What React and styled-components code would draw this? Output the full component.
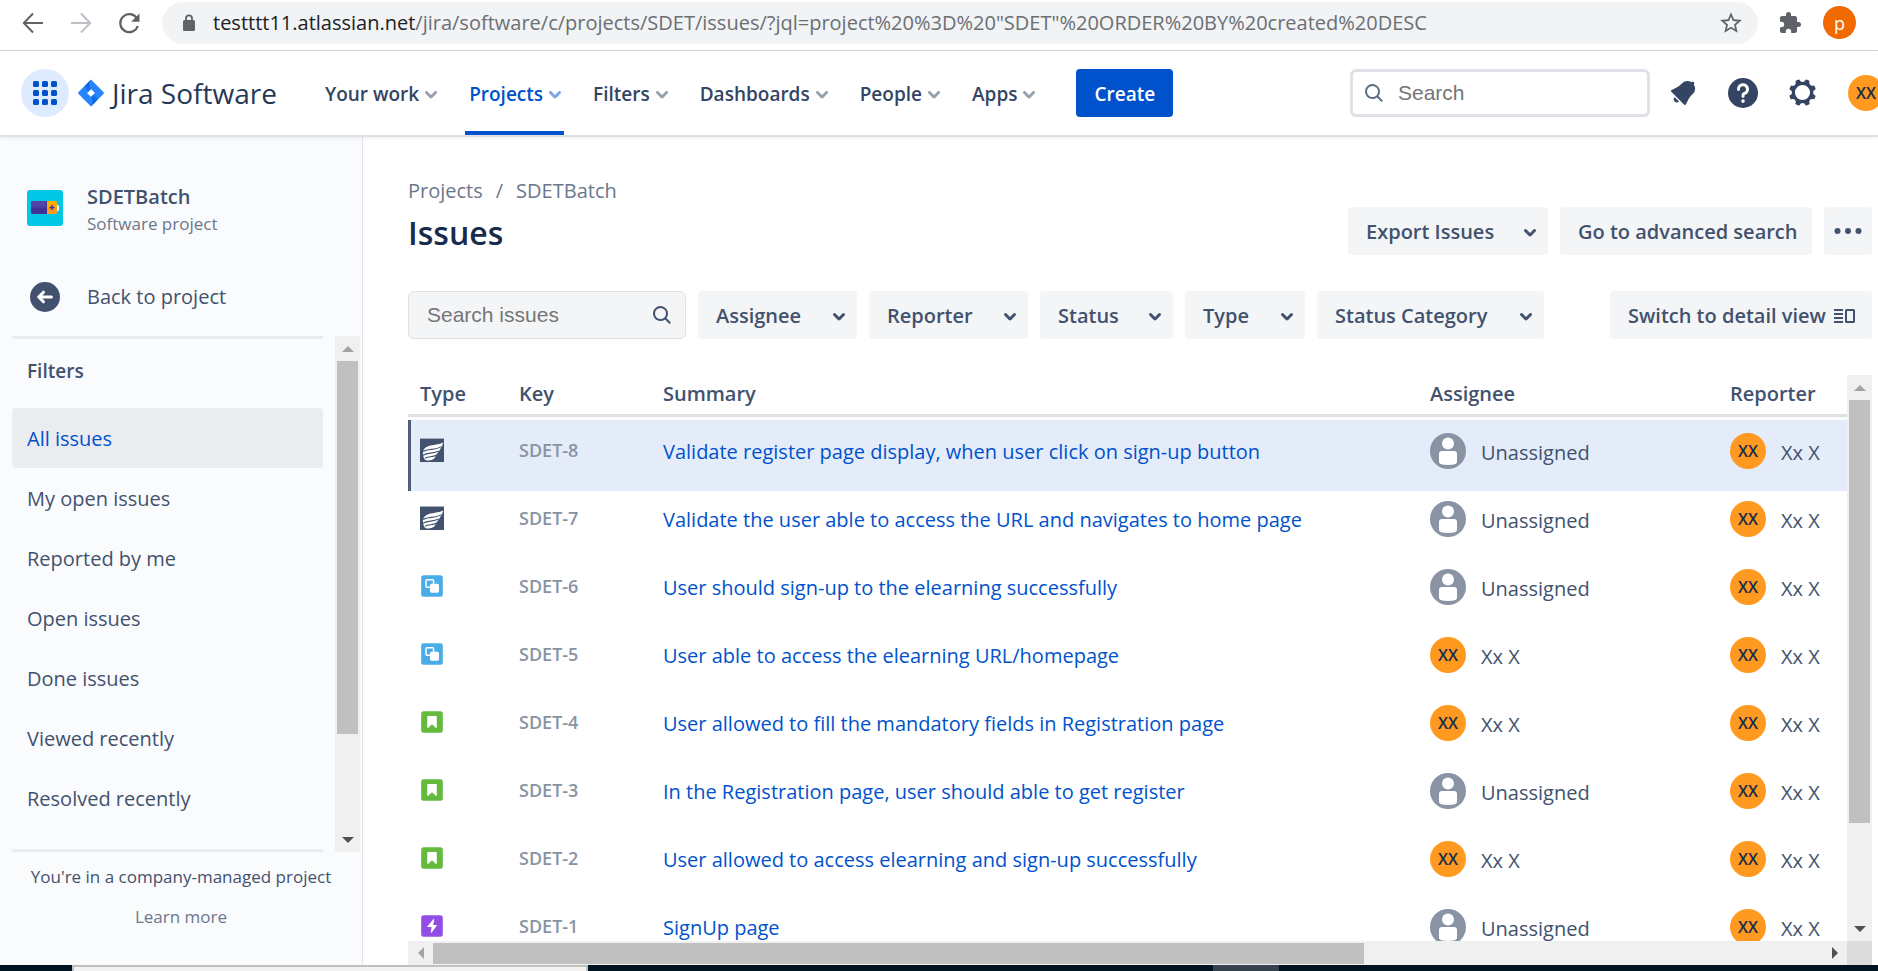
import React from "react";
import styled, { createGlobalStyle } from "styled-components";

const Global = createGlobalStyle`
  *, *::before, *::after { box-sizing: border-box; }
  body { margin: 0; background: #fff; }
  body, button, input {
    font-family: "Open Sans", "Noto Sans", sans-serif;
    font-size: 20px;
    line-height: 28px;
    color: #42526e;
  }
  button { border: 0; padding: 0; background: none; cursor: pointer; }
  a { color: inherit; text-decoration: none; }
  svg { display: block; flex: none; }
  ul, ol { list-style: none; margin: 0; padding: 0; }
  h1, h2, p { margin: 0; }
`;

/* ---------- icons ---------- */

const Chevron = ({ size = 36 }) => (
  <svg width={size} height={size} viewBox="0 0 24 24" fill="currentColor" aria-hidden="true">
    <path d="M8.292 10.293a1.009 1.009 0 000 1.419l2.939 2.965c.218.215.5.322.779.322s.556-.107.769-.322l2.93-2.955a1.01 1.01 0 000-1.419.987.987 0 00-1.406 0l-2.298 2.317-2.307-2.327a.99.99 0 00-1.406 0z" />
  </svg>
);

const Magnifier = ({ size = 24 }) => (
  <svg width={size} height={size} viewBox="0 0 24 24" fill="currentColor" aria-hidden="true">
    <path d="M16.436 15.085l3.94 4.01a1 1 0 01-1.425 1.402l-3.938-4.006a7.5 7.5 0 111.423-1.406zM10.5 16a5.5 5.5 0 100-11 5.5 5.5 0 000 11z" />
  </svg>
);

const GridIcon = () => (
  <svg width="36" height="36" viewBox="0 0 24 24" fill="currentColor" aria-hidden="true">
    {[4, 10, 16].map((y) => [4, 10, 16].map((x) => <rect key={`${x}-${y}`} x={x} y={y} width="4" height="4" rx="1" />))}
  </svg>
);

const JiraMark = () => (
  <svg width="26" height="28" viewBox="0 0 26 28" aria-hidden="true">
    <defs>
      <linearGradient id="jm" x1="13" y1="2" x2="7" y2="13" gradientUnits="userSpaceOnUse">
        <stop offset="0.1" stopColor="#0052cc" />
        <stop offset="1" stopColor="#2684ff" />
      </linearGradient>
      <linearGradient id="jn" x1="13" y1="26" x2="19" y2="15" gradientUnits="userSpaceOnUse">
        <stop offset="0.1" stopColor="#0052cc" />
        <stop offset="1" stopColor="#2684ff" />
      </linearGradient>
    </defs>
    <path fill="#2684ff" fillRule="evenodd" d="M13 0.5L25.4 13.1a1.2 1.2 0 010 1.8L13 27.5 0.6 14.9a1.2 1.2 0 010-1.8zM13 10l-4 4 4 4 4-4z" />
    <path fill="url(#jm)" d="M13 10a6.8 6.8 0 010-9.5L6.6 7.2 9.5 13.5z" />
    <path fill="url(#jn)" d="M13 18a6.8 6.8 0 010 9.5l6.4-6.7-2.9-6.3z" />
  </svg>
);

const Bell = () => (
  <svg width="36" height="36" viewBox="0 0 24 24" fill="currentColor" aria-hidden="true">
    <path d="M6.485 17.669a2 2 0 002.829 0l-2.829-2.83a2 2 0 000 2.83zm4.897-12.191l-.725.725c-.782.782-2.21 1.813-3.206 2.311l-3.017 1.509c-.495.248-.584.774-.187 1.171l8.556 8.556c.398.396.922.313 1.171-.188l1.51-3.016c.494-.988 1.526-2.42 2.311-3.206l.725-.726a5.048 5.048 0 00.64-6.356 1.01 1.01 0 10-1.354-1.494c-.023.025-.046.049-.066.075a5.043 5.043 0 00-2.788-.84 5.036 5.036 0 00-3.57 1.478z" />
  </svg>
);

const Help = () => (
  <svg width="36" height="36" viewBox="0 0 24 24" aria-hidden="true">
    <circle cx="12" cy="12" r="10" fill="currentColor" />
    <path d="M9 9.6a3 3 0 113.9 2.7q-.9.4-.9 1.4v.5" fill="none" stroke="#fff" strokeWidth="2" strokeLinecap="round" />
    <circle cx="12" cy="17.4" r="1.2" fill="#fff" />
  </svg>
);

const Gear = () => (
  <svg width="36" height="36" viewBox="0 0 24 24" fill="currentColor" aria-hidden="true">
    <path d="M11.701 16.7a5.002 5.002 0 11.001-10.003 5.002 5.002 0 01-.001 10.004m8.368-3.117a1.995 1.995 0 01-1.346-1.885c0-.876.563-1.613 1.345-1.885a.48.48 0 00.315-.574 8.947 8.947 0 00-.836-1.993.477.477 0 00-.598-.195 2.04 2.04 0 01-1.29.08 1.988 1.988 0 01-1.404-1.395 2.04 2.04 0 01.076-1.297.478.478 0 00-.196-.597 8.98 8.98 0 00-1.975-.826.479.479 0 00-.574.314 1.995 1.995 0 01-1.885 1.346 1.994 1.994 0 01-1.884-1.345.482.482 0 00-.575-.315c-.708.2-1.379.485-2.004.842a.47.47 0 00-.198.582A2.002 2.002 0 014.445 7.06a.478.478 0 00-.595.196 8.946 8.946 0 00-.833 1.994.48.48 0 00.308.572 1.995 1.995 0 011.323 1.877c0 .867-.552 1.599-1.324 1.877a.479.479 0 00-.308.57 8.99 8.99 0 00.723 1.79.477.477 0 00.624.194c.595-.273 1.343-.264 2.104.238.117.077.225.185.302.3.527.8.512 1.58.198 2.188a.473.473 0 00.168.628 8.946 8.946 0 002.11.897.474.474 0 00.57-.313 1.995 1.995 0 011.886-1.353c.878 0 1.618.567 1.887 1.353a.475.475 0 00.57.313 8.964 8.964 0 002.084-.883.473.473 0 00.167-.631c-.318-.608-.337-1.393.191-2.195.077-.116.185-.225.302-.302.772-.511 1.527-.513 2.125-.23a.477.477 0 00.628-.19 8.925 8.925 0 00.728-1.793.478.478 0 00-.314-.573" />
  </svg>
);

const BackArrow = () => (
  <svg width="24" height="24" viewBox="0 0 24 24" fill="none" stroke="currentColor" strokeWidth="2" aria-hidden="true">
    <path d="M22 12H3M12 2.5L2.8 12l9.2 9.5" />
  </svg>
);
const ForwardArrow = () => (
  <svg width="24" height="24" viewBox="0 0 24 24" fill="none" stroke="currentColor" strokeWidth="2" aria-hidden="true">
    <path d="M2 12h19M12 2.5l9.2 9.5-9.2 9.5" />
  </svg>
);
const Reload = () => (
  <svg width="24" height="24" viewBox="0 0 24 24" aria-hidden="true">
    <path d="M20 7.5A9 9 0 1020.8 15" fill="none" stroke="currentColor" strokeWidth="2.2" />
    <path d="M22.5 2.5v8.3h-8.3z" fill="currentColor" />
  </svg>
);
const Lock = () => (
  <svg width="14" height="18" viewBox="0 0 14 18" aria-hidden="true">
    <rect x="1" y="6" width="12" height="11" rx="1.5" fill="currentColor" />
    <path d="M4 7V4.4a3 3 0 016 0V7" fill="none" stroke="currentColor" strokeWidth="1.8" />
  </svg>
);
const Star = () => (
  <svg width="26" height="26" viewBox="0 0 24 24" fill="currentColor" aria-hidden="true">
    <path d="M22 9.24l-7.19-.62L12 2 9.19 8.63 2 9.24l5.46 4.73L5.82 21 12 17.27 18.18 21l-1.63-7.03zM12 15.4l-3.76 2.27 1-4.28-3.32-2.88 4.38-.38L12 6.1l1.71 4.04 4.38.38-3.32 2.88 1 4.28z" />
  </svg>
);
const Puzzle = () => (
  <svg width="24" height="24" viewBox="0 0 24 24" fill="currentColor" aria-hidden="true">
    <path d="M20.5 11H19V7c0-1.1-.9-2-2-2h-4V3.500a2.500 2.500 0 00-5 0V5H4c-1.100 0-1.990.9-1.990 2v3.800H3.500a2.700 2.700 0 010 5.400H2V20c0 1.100.9 2 2 2h3.800v-1.500a2.700 2.700 0 015.400 0V22H17c1.100 0 2-.9 2-2v-4h1.500a2.500 2.500 0 000-5z" />
  </svg>
);

const Battery = () => (
  <svg width="36" height="36" viewBox="0 0 36 36" aria-hidden="true">
    <rect width="36" height="36" rx="3" fill="#00c7e6" />
    <rect x="29" y="15" width="3" height="6" rx="1" fill="#f4f5f7" />
    <rect x="4" y="11" width="26" height="13" rx="1.500" fill="#ff991f" />
    <path d="M20 11h8.500a1.500 1.500 0 011.500 1.500v5H20z" fill="#ffab00" />
    <path d="M5.500 11H20v13H5.500A1.500 1.500 0 014 22.500v-10A1.500 1.500 0 015.500 11z" fill="#403294" />
    <path d="M5.500 11H19v6.500H4v-5A1.500 1.500 0 015.500 11z" fill="#5243aa" />
    <path d="M25 15v5M22.500 17.500h5" stroke="#403294" strokeWidth="1.400" />
  </svg>
);

const BackCircle = () => (
  <svg width="36" height="36" viewBox="0 0 24 24" aria-hidden="true">
    <circle cx="12" cy="12" r="10" fill="currentColor" />
    <path d="M16.300 12H8M11 8.800L7.800 12l3.200 3.200" fill="none" stroke="#fff" strokeWidth="2" strokeLinecap="round" strokeLinejoin="round" />
  </svg>
);

const Dots = () => (
  <svg width="36" height="36" viewBox="0 0 24 24" fill="currentColor" aria-hidden="true">
    <circle cx="5" cy="12" r="2" />
    <circle cx="12" cy="12" r="2" />
    <circle cx="19" cy="12" r="2" />
  </svg>
);

const DetailView = () => (
  <svg width="22" height="16" viewBox="0 0 22 16" aria-hidden="true">
    <path d="M0 2h9M0 6h9M0 10h9M0 14h9" stroke="currentColor" strokeWidth="2" />
    <rect x="12" y="2" width="8" height="12" rx="0.500" fill="none" stroke="currentColor" strokeWidth="2" />
  </svg>
);

const Zephyr = () => (
  <svg width="24" height="24" viewBox="0 0 24 24" aria-hidden="true">
    <rect width="24" height="24" fill="#42526e" />
    <rect width="24" height="1" fill="#a5adba" />
    <path d="M23.300 4.500C19 7 11 6.500 6.500 9 3.500 10.800 2.500 13.500 3 16.500c.3 2.500 1.500 5.500 3 5.700 3 .6 7 .3 9-2.700.8-1.200 1-2.300 1.800-3.500 1-1.500 2.200-2.700 3.200-4.500 1.200-2.200 2.600-4.300 3.300-7z" fill="#fff" />
    <path d="M3 13.600C8 10.200 15 12.600 21 8.600M3 17.300C8 14 13 16.200 18.500 13M5 20.200c4-2 8-.8 11.500-3.200" fill="none" stroke="#42526e" strokeWidth="1.100" />
  </svg>
);

const TypeTile = ({ color, children }) => (
  <svg width="24" height="24" viewBox="0 0 24 24" aria-hidden="true">
    <rect x="1.200" y="1.200" width="21.600" height="21.600" rx="2.500" fill={color} />
    {children}
  </svg>
);

const typeIcons = {
  Test: <Zephyr />,
  "Sub-task": (
    <TypeTile color="#4bade8">
      <rect x="6" y="5.700" width="7.600" height="7.600" rx="1" fill="none" stroke="#fff" strokeWidth="1.500" />
      <rect x="10" y="9.700" width="9" height="9" rx="1.600" fill="#fff" />
    </TypeTile>
  ),
  Story: (
    <TypeTile color="#63ba3c">
      <path d="M8.200 6h7.600a1 1 0 011 1v10.300c0 .6-.7.800-1.100.4L12 14.200l-3.700 3.500c-.4.4-1.100.2-1.100-.4V7a1 1 0 011-1z" fill="#fff" />
    </TypeTile>
  ),
  Epic: (
    <TypeTile color="#904ee2">
      <path d="M13.300 5.300L7.500 12.200c-.3.400-.1.900.4.900h3.600l-.6 5.200c0 .5.500.7.800.3l5-6.800c.300-.4.100-.9-.4-.9h-3.100l1-5.200c.1-.6-.5-.8-.9-.4z" fill="#fff" />
    </TypeTile>
  ),
};

/* ---------- browser bar ---------- */

const Page = styled.div`
  height: 100vh;
  display: flex;
  flex-direction: column;
  overflow: hidden;
`;

const BrowserBar = styled.div`
  flex: none;
  display: flex;
  align-items: center;
  height: 51px;
  padding: 0 22px 5px 21px;
  border-bottom: 1px solid #d5d7db;
  color: #5f6368;
`;

const BrowserButton = styled.button`
  width: 24px;
  height: 24px;
  margin-right: ${(p) => p.$gap ?? 24}px;
  color: ${(p) => (p.$dim ? "#bdc1c6" : "#5f6368")};
`;

const Omnibox = styled.div`
  flex: 1;
  display: flex;
  align-items: center;
  gap: 17px;
  height: 42px;
  margin-right: 20px;
  padding: 0 14px 0 20px;
  border-radius: 21px;
  background: #f1f3f4;
  color: #5f6368;
`;

const UrlText = styled.div`
  flex: 1;
  white-space: nowrap;
  overflow: hidden;
  color: #6b6f74;
  span { color: #202124; }
`;

const Profile = styled.button`
  width: 33px;
  height: 33px;
  border-radius: 50%;
  background: #f06a00;
  color: #fff;
  font-size: 18px;
  line-height: 30px;
`;

/* ---------- product navigation ---------- */

const TopNav = styled.header`
  flex: none;
  position: relative;
  z-index: 1;
  display: flex;
  align-items: center;
  height: 86px;
  padding-left: 21px;
  border-bottom: 2px solid #dfe1e6;
  box-shadow: 0 1px 3px rgba(9, 30, 66, 0.08);
  overflow: hidden;
  color: #344563;
`;

const Switcher = styled.button`
  flex: none;
  display: grid;
  place-items: center;
  width: 48px;
  height: 48px;
  border-radius: 50%;
  background: #deebff;
  color: #0052cc;
`;

const Brand = styled.a`
  display: flex;
  align-items: center;
  gap: 8px;
  margin: 0 44px 0 9px;
  font-size: 28px;
  color: #253858;
  white-space: nowrap;
`;

const NavList = styled.ul`
  display: flex;
  align-self: stretch;
  gap: 25px;
`;

const NavItem = styled.button`
  display: flex;
  align-items: center;
  height: 100%;
  padding: 6px 0 0 4px;
  border-bottom: 4px solid ${(p) => (p.$active ? "#0052cc" : "transparent")};
  color: ${(p) => (p.$active ? "#0052cc" : "#344563")};
  font-size: 19px;
  font-weight: 600;
  white-space: nowrap;
  svg { opacity: 0.5; margin: 0 -9px 0 -6px; }
`;

const Create = styled.button`
  height: 48px;
  margin: 0 auto 0 38px;
  padding: 2px 18px 0;
  border-radius: 4px;
  background: #0052cc;
  color: #fff;
  font-size: 19px;
  font-weight: 600;
`;

const SearchBox = styled.label`
  display: flex;
  align-items: center;
  gap: 12px;
  width: ${(p) => p.$width}px;
  height: 48px;
  padding: ${(p) => (p.$thick ? "0 9px" : "0 11px 0 18px")};
  border: ${(p) => (p.$thick ? 3 : 1)}px solid #dfe1e6;
  border-radius: 6px;
  background: ${(p) => (p.$thick ? "#fff" : "#f4f5f7")};
  color: ${(p) => (p.$thick ? "#5e6c84" : "#42526e")};
`;

const SearchInput = styled.input`
  flex: 1;
  min-width: 0;
  border: 0;
  padding: 0;
  background: none;
  outline: 0;
  font-family: "Liberation Sans", Arial, sans-serif;
  font-size: 21px;
  &::placeholder { color: #757575; opacity: 1; }
`;

const NavTools = styled.div`
  flex: none;
  display: flex;
  align-items: center;
  gap: 24px;
  margin: 0 -6px 0 15px;
  > :last-child { margin-left: 3px; }
`;

const IconButton = styled.button`
  width: 36px;
  height: 36px;
  color: #344563;
`;

const Avatar = styled.span`
  flex: none;
  display: grid;
  place-items: center;
  width: 36px;
  height: 36px;
  border-radius: 50%;
  background: #ff991f;
  color: #172b4d;
  font-size: 16px;
  font-weight: 600;
`;

/* ---------- sidebar ---------- */

const Body = styled.div`
  flex: 1;
  min-height: 0;
  display: flex;
`;

const Sidebar = styled.aside`
  flex: none;
  display: flex;
  flex-direction: column;
  width: 363px;
  background: #fafbfc;
  border-right: 1px solid #e1e3e8;
`;

const ProjectHead = styled.div`
  display: flex;
  align-items: flex-start;
  gap: 24px;
  padding: 46px 27px 42px;
  svg { margin-top: 7px; }
`;

const ProjectName = styled.h2`
  font-size: 20px;
  font-weight: 600;
  line-height: 28px;
`;

const Small = styled.p`
  font-size: 17px;
  line-height: 26px;
  color: #6b778c;
`;

const BackLink = styled.a`
  display: flex;
  align-items: center;
  gap: 24px;
  height: 36px;
  margin: 0 27px 21px;
`;

const FilterArea = styled.div`
  flex: 1;
  min-height: 0;
  display: flex;
`;

const FilterPane = styled.nav`
  flex: 1;
  padding: 0 12px;
  overflow: hidden;
`;

const FilterInner = styled.div`
  height: 100%;
  border-top: 3px solid #ebecf0;
  border-bottom: 3px solid #ebecf0;
`;

const FilterTitle = styled.h2`
  padding: 18px 15px 23px;
  font-size: 19px;
  font-weight: 600;
  line-height: 28px;
`;

const FilterLink = styled.a`
  display: flex;
  align-items: center;
  height: 60px;
  padding: 2px 15px 0;
  border-radius: 4px;
  background: ${(p) => (p.$active ? "#ebecf0" : "none")};
  color: ${(p) => (p.$active ? "#0052cc" : "#42526e")};
`;

const SideFoot = styled.footer`
  display: grid;
  gap: 14px;
  height: 113px;
  align-content: start;
  padding-top: 12px;
  text-align: center;
  font-size: 17px;
  line-height: 26px;
  a { color: #6b778c; }
`;

/* ---------- scroll bars ---------- */

const Track = styled.div`
  flex: none;
  display: flex;
  flex-direction: ${(p) => (p.$row ? "row" : "column")};
  ${(p) => (p.$row ? "height: 24px;" : "width: 25px;")}
  margin-right: ${(p) => p.$inset ?? 0}px;
  background: #f0f0f0;
`;

const ArrowCell = styled.div`
  flex: none;
  display: grid;
  place-items: center;
  width: 25px;
  height: ${(p) => (p.$row ? 24 : 25)}px;
  color: ${(p) => (p.$dim ? "#a3a3a3" : "#505050")};
`;

const Thumb = styled.div`
  flex: ${(p) => p.$share} 1 0;
  margin: ${(p) => (p.$row ? "2px 0 1px" : "0 2px")};
  background: #c0c0c0;
`;

const Rest = styled.div`
  flex: ${(p) => p.$share} 1 0;
`;

const arrows = { up: "M0 6L6 0l6 6z", down: "M0 0h12L6 6z", left: "M6 0v12L0 6z", right: "M0 0l6 6-6 6z" };

const Arrow = ({ dir }) => {
  const flat = dir === "up" || dir === "down";
  return (
    <svg width={flat ? 12 : 6} height={flat ? 6 : 12} fill="currentColor" aria-hidden="true">
      <path d={arrows[dir]} />
    </svg>
  );
};

const ScrollTrack = ({ row, share, inset }) => (
  <Track $row={row} $inset={inset} aria-hidden="true">
    <ArrowCell $row={row} $dim><Arrow dir={row ? "left" : "up"} /></ArrowCell>
    <Thumb $row={row} $share={share} />
    <Rest $share={100 - share} />
    <ArrowCell $row={row}><Arrow dir={row ? "right" : "down"} /></ArrowCell>
  </Track>
);

/* ---------- issues ---------- */

const Main = styled.main`
  flex: 1;
  min-width: 0;
  display: flex;
  flex-direction: column;
  padding: 40px 6px 0 45px;
`;

const Crumbs = styled.ol`
  display: flex;
  gap: 13px;
  color: #6b778c;
`;

const TitleRow = styled.div`
  display: flex;
  justify-content: space-between;
  align-items: flex-start;
  height: 86px;
`;

const Title = styled.h1`
  font-size: 32px;
  font-weight: 600;
  line-height: 56px;
  color: #172b4d;
`;

const Group = styled.div`
  display: flex;
  gap: 12px;
  margin-top: ${(p) => p.$top ?? 0}px;
`;

const Button = styled.button`
  display: flex;
  align-items: center;
  justify-content: ${(p) => (p.$icon ? "center" : "space-between")};
  gap: 6px;
  width: ${(p) => p.$width}px;
  height: 48px;
  padding: ${(p) => (p.$icon ? "0" : "2px 16px 0 18px")};
  border-radius: 4px;
  background: #f4f5f7;
  font-size: 20px;
  font-weight: 600;
  white-space: nowrap;
`;

const DropButton = styled(Button)`
  padding-right: 0;
`;

const FilterRow = styled.div`
  display: flex;
  justify-content: space-between;
  margin-bottom: 36px;
`;

const TableArea = styled.div`
  flex: 1;
  min-height: 0;
  display: flex;
`;

const TableView = styled.div`
  flex: 1;
  min-width: 0;
  overflow: hidden;
`;

const IssueTable = styled.table`
  width: 100%;
  table-layout: fixed;
  border-collapse: separate;
  border-spacing: 0;
  th {
    height: 42px;
    padding: 0 0 1px 12px;
    border-bottom: 3px solid #dfe1e6;
    text-align: left;
    font-size: 20px;
    font-weight: 600;
  }
  thead::after { content: ""; display: block; height: 3px; }
`;

const Col = styled.col`
  width: ${(p) => (p.$width ? `${p.$width}px` : "auto")};
`;

const IssueRow = styled.tr`
  background: ${(p) => (p.$selected ? "#e4ecfa" : "none")};
  td {
    height: ${(p) => (p.$selected ? 71 : 68)}px;
    padding: ${(p) => (p.$selected ? 13 : 10)}px 0 0 12px;
    vertical-align: top;
    white-space: nowrap;
  }
  td:first-child {
    padding-top: ${(p) => (p.$selected ? 18 : 15)}px;
    box-shadow: ${(p) => (p.$selected ? "inset 3px 0 0 #505f79" : "none")};
  }
`;

const IssueKey = styled.a`
  display: block;
  padding-top: 4px;
  font-size: 18px;
  font-weight: 600;
  line-height: 26px;
  color: #8993a4;
`;

const Summary = styled.a`
  display: block;
  padding-top: 5px;
  color: #0052cc;
`;

const Person = styled.span`
  display: flex;
  align-items: center;
  gap: 15px;
  color: #42526e;
`;

const PersonName = styled.span`
  padding-top: 3px;
`;

const NoAvatar = () => (
  <svg width="36" height="36" viewBox="0 0 36 36" aria-hidden="true">
    <circle cx="18" cy="18" r="18" fill="#8993a4" />
    <circle cx="18" cy="10.500" r="6" fill="#fff" />
    <path d="M9 21a3 3 0 013-3h12a3 3 0 013 3v8q0 3-9 3t-9-3z" fill="#fff" />
  </svg>
);

const Assigned = ({ name }) => (
  <Person>
    {name ? <Avatar>XX</Avatar> : <NoAvatar />}
    <PersonName>{name || "Unassigned"}</PersonName>
  </Person>
);

const issues = [
  ["Test", "SDET-8", "Validate register page display, when user click on sign-up button", null],
  ["Test", "SDET-7", "Validate the user able to access the URL and navigates to home page", null],
  ["Sub-task", "SDET-6", "User should sign-up to the elearning successfully", null],
  ["Sub-task", "SDET-5", "User able to access the elearning URL/homepage", "Xx X"],
  ["Story", "SDET-4", "User allowed to fill the mandatory fields in Registration page", "Xx X"],
  ["Story", "SDET-3", "In the Registration page, user should able to get register", null],
  ["Story", "SDET-2", "User allowed to access elearning and sign-up successfully", "Xx X"],
  ["Epic", "SDET-1", "SignUp page", null],
];

const navItems = ["Your work", "Projects", "Filters", "Dashboards", "People", "Apps"];
const sideFilters = ["All issues", "My open issues", "Reported by me", "Open issues", "Done issues", "Viewed recently", "Resolved recently"];
const dropFilters = [["Assignee", 159], ["Reporter", 159], ["Status", 133], ["Type", 120], ["Status Category", 227]];

const BottomBar = styled.div`
  flex: none;
  display: flex;
  height: 24px;
`;

const Corner = styled.div`
  width: 25px;
  background: #dcdcdc;
`;

const Wide = styled.div`
  flex: 1;
`;

/* ---------- task bar ---------- */

const TaskBar = styled.div`
  flex: none;
  display: flex;
  height: 6px;
  background: #001320;
`;

const TaskField = styled.div`
  width: 516px;
  margin-left: 72px;
  border: 2px solid #c0c0c0;
  border-bottom: 0;
  background: #f2f2f2;
`;

const TaskActive = styled.div`
  width: 66px;
  margin-left: 625px;
  background: #35414d;
`;

export default function App() {
  return (
    <Page>
      <Global />
      <BrowserBar>
        <BrowserButton aria-label="Back"><BackArrow /></BrowserButton>
        <BrowserButton aria-label="Forward" $dim><ForwardArrow /></BrowserButton>
        <BrowserButton aria-label="Reload" $gap={21}><Reload /></BrowserButton>
        <Omnibox>
          <Lock />
          <UrlText>
            <span>testttt11.atlassian.net</span>/jira/software/c/projects/SDET/issues/?jql=project%20%3D%20"SDET"%20ORDER%20BY%20created%20DESC
          </UrlText>
          <Star />
        </Omnibox>
        <BrowserButton aria-label="Extensions" $gap={21}><Puzzle /></BrowserButton>
        <Profile aria-label="Profile">p</Profile>
      </BrowserBar>

      <TopNav>
        <Switcher aria-label="Switch to"><GridIcon /></Switcher>
        <Brand href="#home"><JiraMark />Jira Software</Brand>
        <NavList>
          {navItems.map((name) => (
            <li key={name}><NavItem $active={name === "Projects"}>{name}<Chevron /></NavItem></li>
          ))}
        </NavList>
        <Create>Create</Create>
        <SearchBox $width={300} $thick>
          <Magnifier />
          <SearchInput placeholder="Search" aria-label="Search" />
        </SearchBox>
        <NavTools>
          <IconButton aria-label="Notifications"><Bell /></IconButton>
          <IconButton aria-label="Help"><Help /></IconButton>
          <IconButton aria-label="Settings"><Gear /></IconButton>
          <Avatar as="button" aria-label="Your profile">XX</Avatar>
        </NavTools>
      </TopNav>

      <Body>
        <Sidebar>
          <ProjectHead>
            <Battery />
            <div>
              <ProjectName>SDETBatch</ProjectName>
              <Small>Software project</Small>
            </div>
          </ProjectHead>
          <BackLink href="#project"><BackCircle />Back to project</BackLink>
          <FilterArea>
            <FilterPane>
              <FilterInner>
                <FilterTitle>Filters</FilterTitle>
                {sideFilters.map((name, i) => (
                  <FilterLink key={name} href="#filter" $active={i === 0}>{name}</FilterLink>
                ))}
              </FilterInner>
            </FilterPane>
            <ScrollTrack share={80} inset={2} />
          </FilterArea>
          <SideFoot>
            <p>You're in a company-managed project</p>
            <a href="#more">Learn more</a>
          </SideFoot>
        </Sidebar>

        <Main>
          <Crumbs>
            <li><a href="#projects">Projects</a></li>
            <li>/</li>
            <li><a href="#batch">SDETBatch</a></li>
          </Crumbs>
          <TitleRow>
            <Title>Issues</Title>
            <Group $top={2}>
              <DropButton $width={200}>Export Issues<Chevron /></DropButton>
              <Button $width={252}>Go to advanced search</Button>
              <Button $icon $width={48} aria-label="More"><Dots /></Button>
            </Group>
          </TitleRow>
          <FilterRow>
            <Group>
              <SearchBox $width={278}>
                <SearchInput placeholder="Search issues" aria-label="Search issues" />
                <Magnifier />
              </SearchBox>
              {dropFilters.map(([name, width]) => (
                <DropButton key={name} $width={width}>{name}<Chevron /></DropButton>
              ))}
            </Group>
            <Button $width={262}>Switch to detail view<DetailView /></Button>
          </FilterRow>
          <TableArea>
            <TableView>
              <IssueTable>
                <colgroup>
                  <Col $width={99} /><Col $width={144} /><Col /><Col $width={300} /><Col $width={129} />
                </colgroup>
                <thead>
                  <tr>
                    {["Type", "Key", "Summary", "Assignee", "Reporter"].map((h) => <th key={h} scope="col">{h}</th>)}
                  </tr>
                </thead>
                <tbody>
                  {issues.map(([type, key, summary, assignee], i) => (
                    <IssueRow key={key} $selected={i === 0}>
                      <td aria-label={type}>{typeIcons[type]}</td>
                      <td><IssueKey href="#issue">{key}</IssueKey></td>
                      <td><Summary href="#issue">{summary}</Summary></td>
                      <td><Assigned name={assignee} /></td>
                      <td><Assigned name="Xx X" /></td>
                    </IssueRow>
                  ))}
                </tbody>
              </IssueTable>
            </TableView>
            <ScrollTrack share={82} />
          </TableArea>
          <BottomBar>
            <Wide><ScrollTrack row share={67} /></Wide>
            <Corner />
          </BottomBar>
        </Main>
      </Body>
      <TaskBar><TaskField /><TaskActive /></TaskBar>
    </Page>
  );
}
